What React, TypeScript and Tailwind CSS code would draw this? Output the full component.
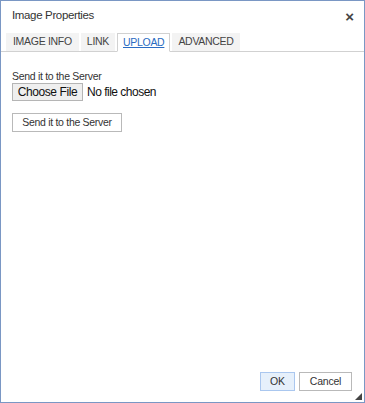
export default function App() {
  const font = { fontFamily: '"Liberation Sans", Arial, sans-serif' };
  return (
    <div style={font} className="w-[365px] h-[403px] bg-white border border-[#7a97c4] flex flex-col text-[#333]">
      <div className="flex items-center justify-between h-[30px] pl-[11px] pr-[10px]">
        <span className="text-[11.5px] tracking-[-0.35px] text-[#333]">Image Properties</span>
        <span className="text-[15px] font-bold text-[#444] leading-none">×</span>
      </div>
      <div className="flex items-end h-[21px] pl-[5px] gap-[2px] border-b border-[#d1d1d1] text-[10.5px] tracking-[-0.3px] text-[#444]">
        <div className="h-[18px] px-[7px] bg-[#f3f3f3] flex items-center">IMAGE INFO</div>
        <div className="h-[18px] px-[6px] bg-[#f3f3f3] flex items-center">LINK</div>
        <div className="h-[19px] -mb-px px-[5px] bg-white border border-[#d1d1d1] border-b-white flex items-center text-[#2a6bc2] underline">UPLOAD</div>
        <div className="h-[18px] px-[6px] bg-[#f3f3f3] flex items-center">ADVANCED</div>
      </div>
      <div className="flex-1 flex flex-col pl-[11px] pt-[18px]">
        <div className="text-[10.5px] tracking-[-0.3px] leading-[13px] text-[#333]">Send it to the Server</div>
        <div className="flex items-center gap-[4px]">
          <button className="h-[18px] w-[71px] border border-[#b5b5b5] bg-[#efefef] text-[12px] tracking-[-0.4px] leading-none text-[#111]">Choose File</button>
          <span className="text-[12px] tracking-[-0.5px] text-[#111]">No file chosen</span>
        </div>
        <div className="flex mt-[12px]">
          <button className="h-[19px] w-[110px] border border-[#b9b9b9] bg-white text-[10.5px] tracking-[-0.3px] text-[#333]">Send it to the Server</button>
        </div>
      </div>
      <div className="flex justify-end gap-[4px] pr-[12px] pb-[11px] relative">
        <button className="h-[19px] w-[35px] border border-[#aac7ef] bg-[#e6f0fb] text-[10.5px] text-[#333]">OK</button>
        <button className="h-[19px] w-[53px] border border-[#b9b9b9] bg-white text-[10.5px] tracking-[-0.2px] text-[#333]">Cancel</button>
        <svg className="absolute right-[2px] bottom-[2px]" width="7" height="7" viewBox="0 0 7 7">
          <path d="M7 0 L7 7 L0 7 Z" fill="#444" />
        </svg>
      </div>
    </div>
  );
}
